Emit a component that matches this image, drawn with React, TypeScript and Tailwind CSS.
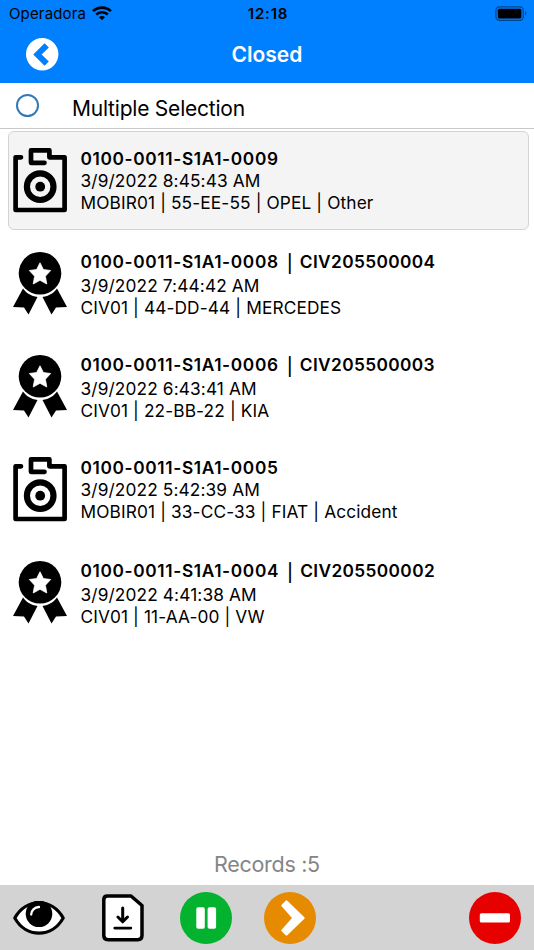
interface RecordItem {
   id: string;
   certificate?: string;
   date: string;
   details: string;
   selected?: boolean;
}

const records: RecordItem[] = [
   {
      id: "0100-0011-S1A1-0009",
      date: "3/9/2022 8:45:43 AM",
      details: "MOBIR01 | 55-EE-55 | OPEL | Other",
      selected: true,
   },
   {
      id: "0100-0011-S1A1-0008",
      certificate: "CIV205500004",
      date: "3/9/2022 7:44:42 AM",
      details: "CIV01 | 44-DD-44 | MERCEDES",
   },
   {
      id: "0100-0011-S1A1-0006",
      certificate: "CIV205500003",
      date: "3/9/2022 6:43:41 AM",
      details: "CIV01 | 22-BB-22 | KIA",
   },
   {
      id: "0100-0011-S1A1-0005",
      date: "3/9/2022 5:42:39 AM",
      details: "MOBIR01 | 33-CC-33 | FIAT | Accident",
   },
   {
      id: "0100-0011-S1A1-0004",
      certificate: "CIV205500002",
      date: "3/9/2022 4:41:38 AM",
      details: "CIV01 | 11-AA-00 | VW",
   },
];

function WifiIcon() {
   return (
      <svg className="mb-0.5" width="20" height="14" viewBox="0 0 20 14" fill="none">
         <path d="M1.1 5.1C6 .4 14 .4 18.9 5.1" stroke="#000" strokeWidth="2.7" />
         <path d="M4.2 8.5C7.4 5.4 12.6 5.4 15.8 8.5" stroke="#000" strokeWidth="2.5" />
         <path d="M10 14L6.9 11.2C8.7 9.7 11.3 9.7 13.1 11.2Z" fill="#000" />
      </svg>
   );
}

function BatteryIcon() {
   return (
      <svg className="mb-0.5" width="32" height="15" viewBox="0 0 32 15">
         <rect x=".9" y=".9" width="27.4" height="13.4" rx="3.6" fill="none" stroke="#00468c" strokeWidth="1.2" />
         <rect x="2.8" y="2.8" width="23.6" height="9.6" rx="1.5" fill="#000" />
         <path d="M30 5.2C31.8 5.8 31.8 9 30 9.6Z" fill="#00468c" />
      </svg>
   );
}

function ClipboardIcon() {
   return (
      <svg width="54" height="65" viewBox="0 0 54 65" fill="none" stroke="#000">
         <path
            d="M8 9.3H2.6V62H51.6V9.3H36.4V2.4H18V14.8H31.5"
            strokeWidth="4.7"
            strokeLinecap="round"
            strokeLinejoin="round"
         />
         <circle cx="27.2" cy="38.7" r="13.3" strokeWidth="6.2" />
         <circle cx="27.2" cy="38.7" r="4.9" fill="#000" stroke="none" />
      </svg>
   );
}

function AwardIcon() {
   return (
      <svg className="mt-px" width="54" height="65" viewBox="0 0 54 65">
         <path d="M10 36.5C13 41 18 44 24.5 45L15.5 62.5L11 55.5L0 55Z" />
         <path d="M44 36.5C41 41 36 44 29.5 45L38.5 62.5L43 55.5L54 55Z" />
         <circle cx="27" cy="21.3" r="21.3" />
         <path
            d="M27 10.8L30.4 17.6L37.7 18.5L32.4 24.2L33.8 32L27 28.3L20.2 32L21.6 24.2L16.3 18.5L23.6 17.6Z"
            fill="#fff"
            stroke="#fff"
            strokeWidth=".8"
            strokeLinejoin="round"
         />
      </svg>
   );
}

function EyeIcon() {
   return (
      <svg width="52" height="34" viewBox="0 0 52 34">
         <path
            d="M1.8 17C13 -3.2 39 -3.2 50.2 17C39 37.2 13 37.2 1.8 17Z"
            fill="#fff"
            stroke="#000"
            strokeWidth="3.2"
            strokeLinejoin="round"
         />
         <circle cx="26" cy="12.8" r="13.3" />
         <path d="M18.2 13.5C18.2 9.5 21.5 6.3 26 6" fill="none" stroke="#fff" strokeWidth="2.3" strokeLinecap="round" />
      </svg>
   );
}

function DownloadIcon() {
   return (
      <svg width="42" height="48" viewBox="0 0 42 48" fill="none" stroke="#000" strokeLinecap="round" strokeLinejoin="round">
         <path
            d="M5.5 2H29L40 11.5V41.5Q40 45.7 35.8 45.7H6Q1.8 45.7 1.8 41.5V5.7Q1.8 2 5.5 2Z"
            fill="#fff"
            strokeWidth="3.5"
         />
         <path d="M20.7 14V27.3M15.9 23L20.7 27.8L25.5 23" strokeWidth="3" />
         <path d="M12.7 34.1H28.9" strokeWidth="2.6" />
      </svg>
   );
}

function RecordRow({ id, certificate, date, details, selected }: RecordItem) {
   return (
      <li
         className={
            selected
               ? "flex h-[99px] rounded-md border border-[#d3d3d3] bg-[#f4f4f4] pl-1 pt-4"
               : "flex h-[99px] rounded-md border border-transparent pl-1 pt-4"
         }
      >
         {certificate ? <AwardIcon /> : <ClipboardIcon />}
         <div className="ml-[13.5px] whitespace-nowrap text-[17.3px] leading-[22px] tracking-[0.12px]">
            <div
               className={
                  certificate
                     ? "mb-0.5 flex h-[22px] font-semibold"
                     : "flex h-[22px] font-semibold"
               }
            >
               <span className="tracking-[0.64px]">{id}</span>
               {certificate && (
                  <>
                     <span className="ml-2 mr-[7px] pt-0.5 text-[17.5px] font-medium">|</span>
                     <span className="tracking-[0.37px]">{certificate}</span>
                  </>
               )}
            </div>
            <p>{date}</p>
            <p>{details}</p>
         </div>
      </li>
   );
}

export default function App() {
   return (
      <div className="flex h-[950px] w-[534px] flex-col overflow-hidden bg-white font-['Inter',sans-serif] text-black">
         <header className="h-[83px] bg-[#007fff]">
            <div className="grid h-7 grid-cols-3 items-center pl-[9px] pr-[7px] text-[15px]">
               <div className="flex items-center gap-1.5">
                  <span className="tracking-[0.15px]">Operadora</span>
                  <WifiIcon />
               </div>
               <span className="text-center font-semibold tracking-[0.8px]">12:18</span>
               <div className="flex justify-end">
                  <BatteryIcon />
               </div>
            </div>
            <div className="grid h-[53px] grid-cols-3 items-center pl-[26px] pr-[26px]">
               <button className="w-8">
                  <svg width="33" height="33" viewBox="0 0 33 33">
                     <circle cx="16.2" cy="16.3" r="16.2" fill="#fff" />
                     <path d="M20.7 7.3L11.5 16.5L20.7 25.7" fill="none" stroke="#007fff" strokeWidth="6" />
                  </svg>
               </button>
               <h1 className="text-center text-[21px] font-semibold text-white">Closed</h1>
            </div>
         </header>

         <div className="flex h-[46px] items-center border-b border-[#c8c8c8] pl-4">
            <span className="size-[23px] rounded-full border-2 border-[#337ab7]" />
            <span className="ml-[33px] mt-1.5 text-[21px] tracking-[-0.22px]">Multiple Selection</span>
         </div>

         <ul className="flex flex-1 flex-col gap-1 pl-2 pr-[5px] pt-[2px]">
            {records.map((record) => (
               <RecordRow key={record.id} {...record} />
            ))}
         </ul>

         <p className="mb-[7px] text-center text-[21.5px] leading-7 tracking-[-0.3px] text-[#858585]">Records :5</p>

         <footer className="flex h-[65px] items-center bg-[#d3d3d3] pl-[13px] pr-[13px]">
            <button>
               <EyeIcon />
            </button>
            <button className="ml-[37px]">
               <DownloadIcon />
            </button>
            <button className="ml-9">
               <svg width="52" height="52" viewBox="0 0 52 52">
                  <circle cx="26" cy="26" r="26" fill="#03b22e" />
                  <rect x="16.3" y="15.2" width="8.5" height="21.5" rx="1.8" fill="#fff" />
                  <rect x="27.6" y="15.2" width="8.5" height="21.5" rx="1.8" fill="#fff" />
               </svg>
            </button>
            <button className="ml-8">
               <svg width="52" height="52" viewBox="0 0 52 52">
                  <circle cx="26" cy="26" r="26" fill="#e68a00" />
                  <path
                     d="M22.5 9.5L39.5 26L22.5 42.5L18.5 38.5L29.5 26L18.5 13.5Z"
                     fill="#fff"
                     stroke="#fff"
                     strokeWidth="2.4"
                     strokeLinejoin="round"
                  />
               </svg>
            </button>
            <button className="ml-auto">
               <svg width="52" height="52" viewBox="0 0 52 52">
                  <circle cx="26" cy="26" r="26" fill="#e60000" />
                  <rect x="10.8" y="21.3" width="30.2" height="9.2" rx="1.5" fill="#fff" />
               </svg>
            </button>
         </footer>
      </div>
   );
}
